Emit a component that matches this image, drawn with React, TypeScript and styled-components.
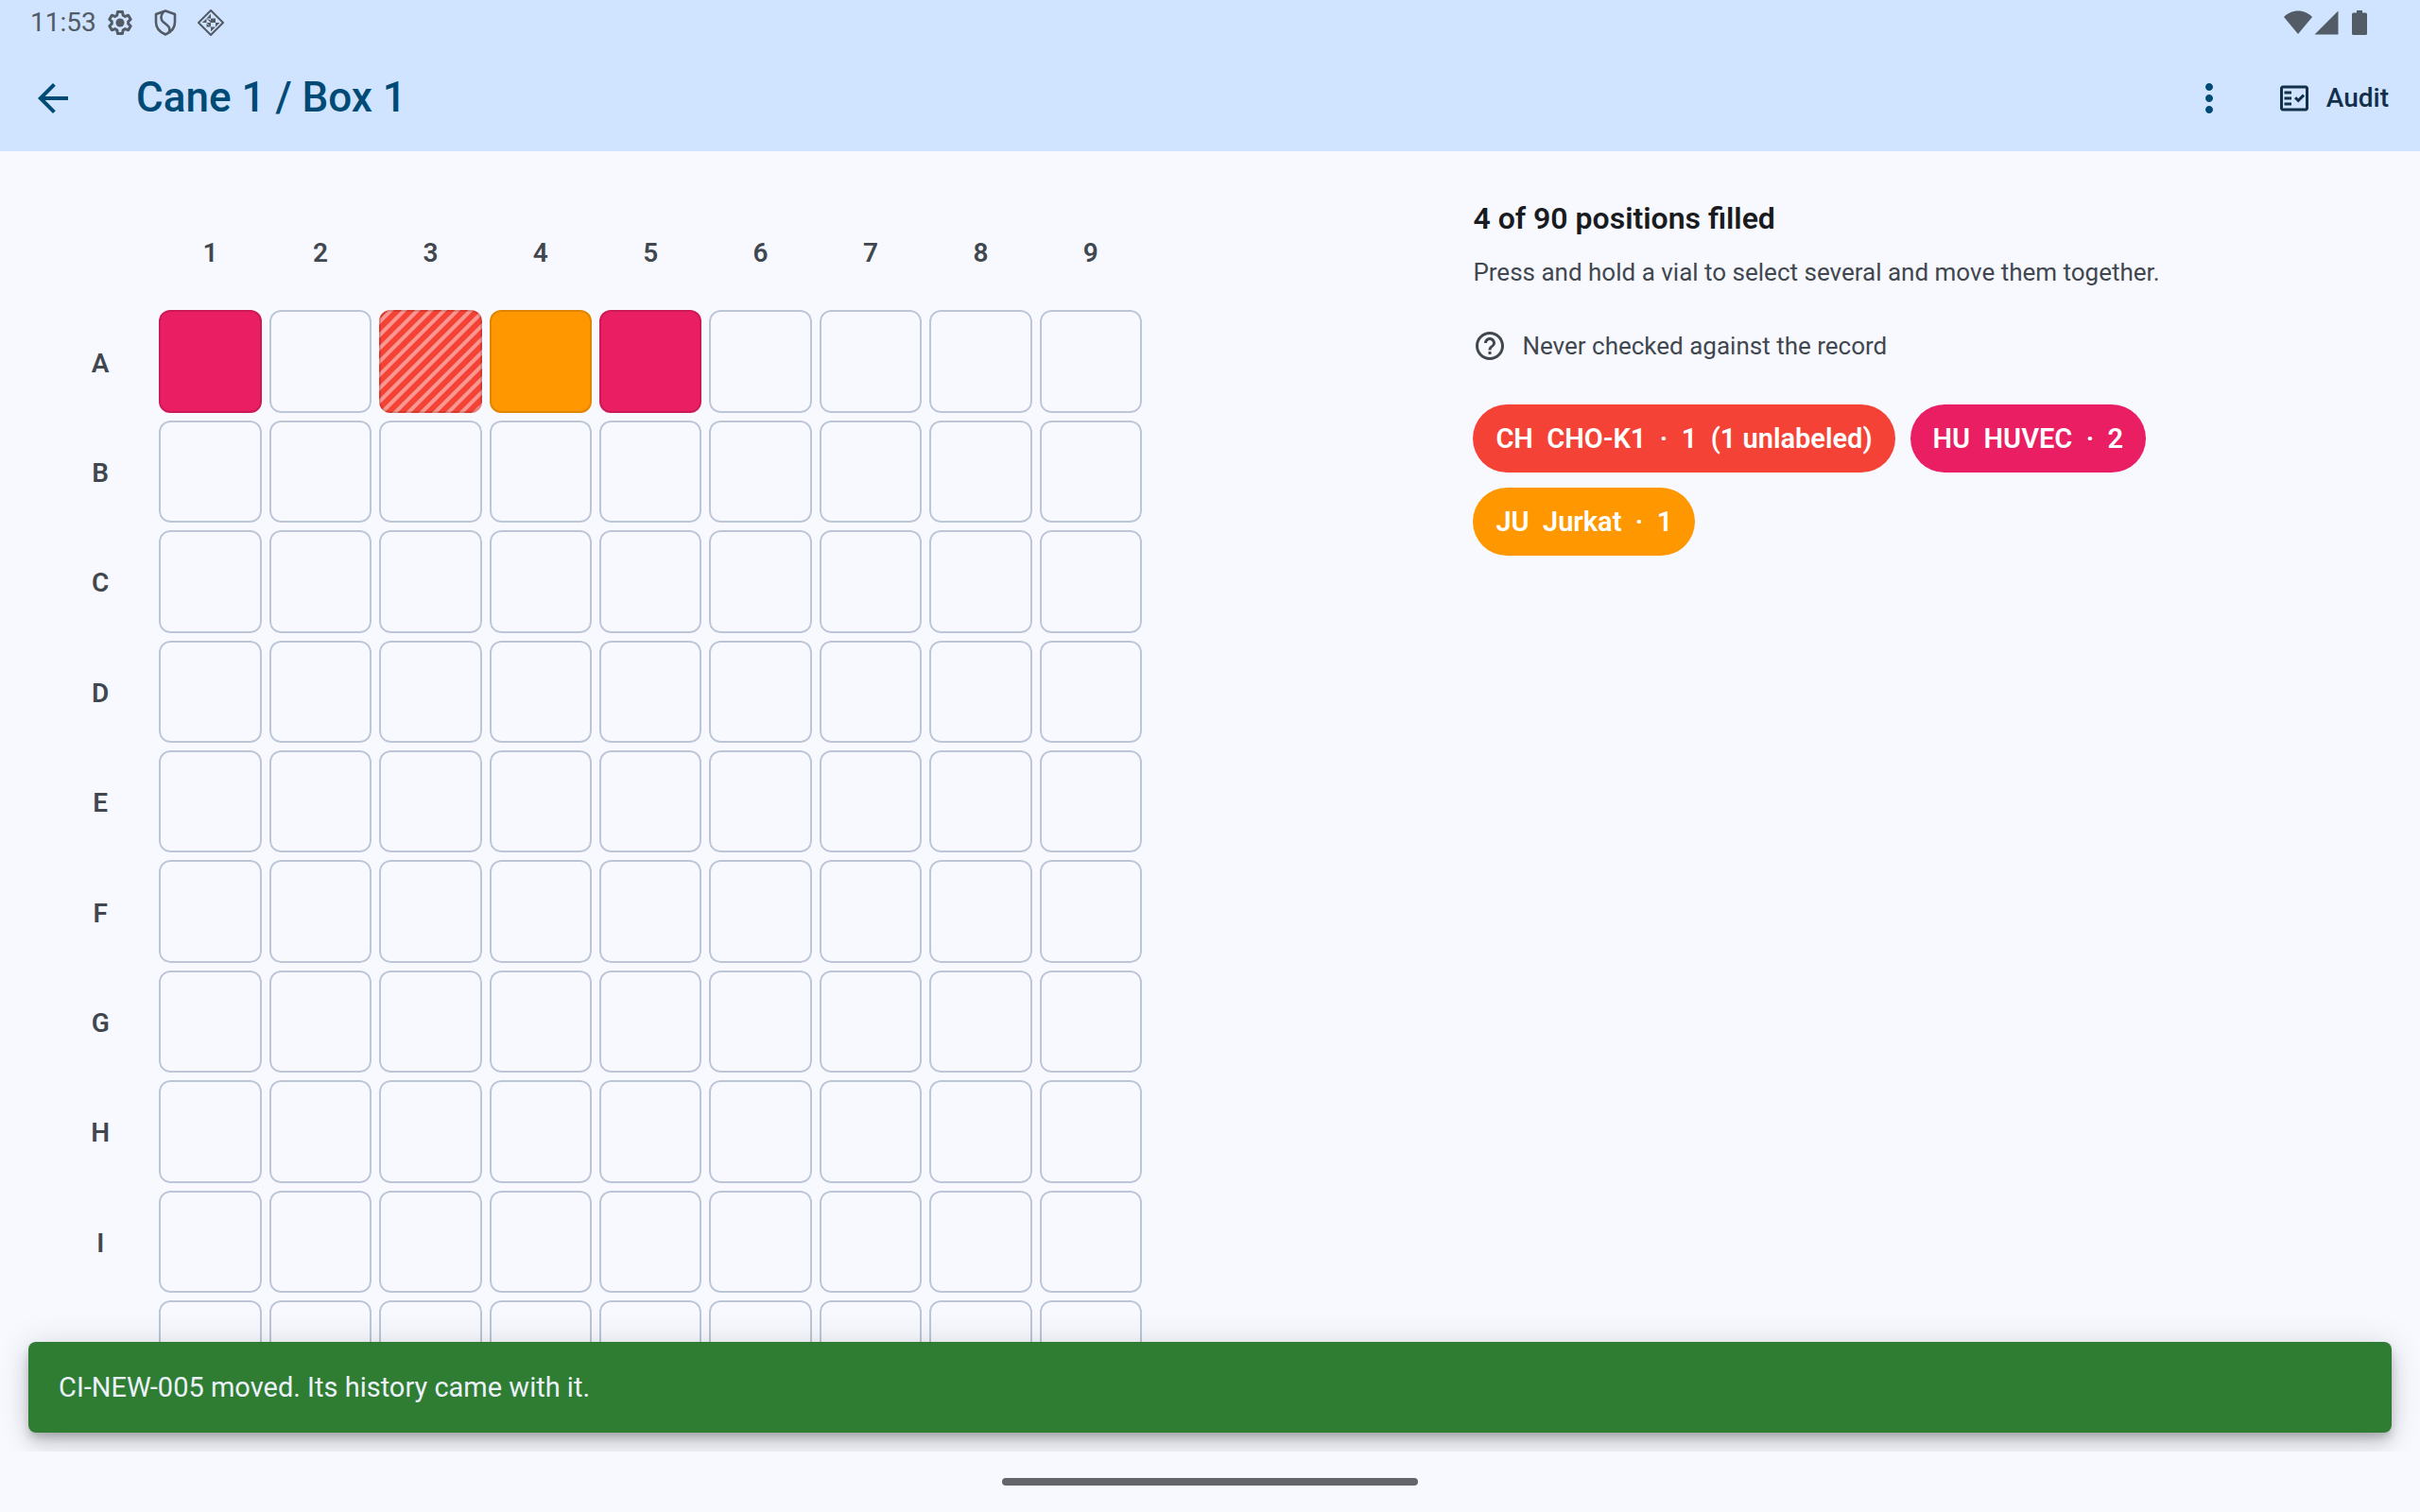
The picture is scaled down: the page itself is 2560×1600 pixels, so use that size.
import React from "react";
import styled, { createGlobalStyle } from "styled-components";

const GlobalStyle = createGlobalStyle`
  *, *::before, *::after { box-sizing: border-box; }
  html, body, #root { height: 100%; margin: 0; }
  body {
    background: #f8f9ff;
    color: #181c20;
    font-family: Roboto, "Liberation Sans", sans-serif;
    overflow: hidden;
  }
  h1, h2, p, ul { margin: 0; padding: 0; }
  button { border: 0; background: none; padding: 0; font: inherit; color: inherit; cursor: pointer; }
`;

const Screen = styled.div`
  display: flex;
  flex-direction: column;
  height: 100vh;
`;

const Header = styled.header`
  flex: none;
  background: #d0e4ff;
`;

const StatusBar = styled.div`
  display: flex;
  align-items: center;
  justify-content: space-between;
  height: 48px;
  padding: 0 56px 0 32px;
  color: #525b66;
`;

const StatusGroup = styled.div<{ $gap: number }>`
  display: flex;
  align-items: center;
  gap: ${({ $gap }) => $gap}px;
`;

const Clock = styled.time`
  font-size: 28px;
  line-height: 48px;
`;

const AppBar = styled.div`
  display: flex;
  align-items: center;
  height: 112px;
  padding: 0 33px 0 32px;
  color: #004b76;
`;

const IconButton = styled.button`
  display: flex;
  align-items: center;
  justify-content: center;
  width: 48px;
  height: 96px;
`;

const Title = styled.h1`
  flex: 1;
  margin-left: 64px;
  padding-bottom: 2px;
  font-size: 44px;
  line-height: 56px;
  font-weight: 500;
`;

const AuditButton = styled.button`
  display: flex;
  align-items: center;
  gap: 16px;
  height: 80px;
  margin-left: 48px;
  color: #12304b;
  font-size: 28px;
  line-height: 40px;
  font-weight: 500;
`;

const Body = styled.main`
  position: relative;
  flex: 1;
  min-height: 0;
  overflow: hidden;
`;

const Panes = styled.div`
  display: grid;
  grid-template-columns: minmax(0, 3fr) minmax(0, 2fr);
  gap: 80px;
  padding: 48px;
`;

const BoxGrid = styled.div`
  display: grid;
  grid-template-columns: repeat(10, minmax(0, 1fr));
  max-width: 1164px;
  align-self: start;
`;

const Slot = styled.div`
  aspect-ratio: 1;
  padding: 4px;
`;

const AxisLabel = styled(Slot)`
  display: flex;
  align-items: center;
  justify-content: center;
  padding-top: 8px;
  color: #41474f;
  font-size: 28px;
  line-height: 40px;
  font-weight: 600;
`;

const Position = styled.button<{ $fill?: string }>`
  position: relative;
  display: block;
  width: 100%;
  height: 100%;
  overflow: hidden;
  border-radius: 12px;
  background: ${({ $fill }) => $fill ?? "transparent"};

  &::after {
    content: "";
    position: absolute;
    inset: 0;
    border: 2px solid ${({ $fill }) => ($fill ? "rgba(0, 0, 0, 0.12)" : "#bcc6d6")};
    border-radius: 12px;
  }
`;

const HatchArt = styled.svg`
  display: block;
  width: 100%;
  height: 100%;
`;

const Summary = styled.section`
  display: flex;
  flex-direction: column;
`;

const SummaryTitle = styled.h2`
  font-size: 32px;
  line-height: 46px;
  font-weight: 600;
`;

const Hint = styled.p`
  margin-top: 18px;
  color: #41474f;
  font-size: 26px;
  line-height: 32px;
`;

const CheckState = styled.p`
  display: flex;
  align-items: center;
  gap: 16px;
  margin-top: 44px;
  color: #41474f;
  font-size: 26px;
  line-height: 36px;
`;

const Chips = styled.ul`
  display: flex;
  flex-wrap: wrap;
  gap: 16px;
  margin-top: 44px;
  list-style: none;
`;

const Chip = styled.li<{ $fill: string }>`
  height: 72px;
  padding: 16px 24px;
  border-radius: 36px;
  background: ${({ $fill }) => $fill};
  color: #ffffff;
  font-size: 29px;
  line-height: 40px;
  font-weight: 600;
  white-space: pre;
`;

const Snackbar = styled.div`
  position: absolute;
  left: 30px;
  right: 30px;
  bottom: 20px;
  padding: 28px 32px;
  border-radius: 8px;
  background: #2e7d32;
  color: #ecf1f9;
  font-size: 29px;
  line-height: 40px;
  box-shadow:
    0 6px 10px -2px rgba(0, 0, 0, 0.2),
    0 12px 20px rgba(0, 0, 0, 0.14),
    0 2px 36px rgba(0, 0, 0, 0.12);
`;

const NavBar = styled.footer`
  display: flex;
  flex: none;
  justify-content: center;
  height: 64px;
  padding-top: 28px;
`;

const Handle = styled.div`
  width: 440px;
  height: 8px;
  border-radius: 4px;
  background: #646568;
`;

const GearIcon = () => (
  <svg width="28" height="28" viewBox="0 0 28 28" fill="none" aria-hidden="true">
    <path
      d="M11.5 2.500h5l.7 3.700 2.200 1.200 3.300-1.200 2.500 4.300-2.500 2.300v2.400l2.500 2.300-2.500 4.300-3.300-1.200-2.200 1.200-.7 3.700h-5l-.7-3.700-2.200-1.200-3.300 1.200-2.500-4.300 2.500-2.300v-2.400l-2.500-2.300 2.500-4.300 3.300 1.200 2.200-1.200z"
      stroke="currentColor"
      strokeWidth="3"
      strokeLinejoin="round"
    />
    <circle cx="14" cy="14" r="4.500" fill="currentColor" />
  </svg>
);

const ShieldIcon = () => (
  <svg width="28" height="28" viewBox="0 0 28 28" fill="none" stroke="currentColor" aria-hidden="true">
    <path d="M14 1.500 24 5v8.500c0 6-4.200 10.600-10 13-5.800-2.400-10-7-10-13V5z" strokeWidth="2.600" strokeLinejoin="round" />
    <path d="M12 2.500c-3.400 4-3.400 8.200 0 11l4 3.200c2.500 2 3 4.600 1.800 8" strokeWidth="2.600" />
  </svg>
);

const DiamondIcon = () => (
  <svg width="28" height="28" viewBox="0 0 28 28" aria-hidden="true">
    <path d="M14 1 27 14 14 27 1 14z" fill="none" stroke="currentColor" strokeWidth="2" strokeLinejoin="round" />
    <path
      d="M14 4.500v5H9.500zM14 9.500h5L14 14zM9.500 9.500V14H4.800zM9.500 9.500 14 14v-2.500zM19 9.500V14h-5zM19 14h4.500L19 18.500zM9.500 14H14v4.500zM14 18.500h5L14 23.500zM9.500 18.500H14L9.500 15z"
      fill="currentColor"
    />
  </svg>
);

const WifiIcon = () => (
  <svg width="30" height="26" viewBox="0 0 30 26" aria-hidden="true">
    <path d="M15 25 0 7C4 3 9 .5 15 .5S26 3 30 7z" fill="currentColor" />
  </svg>
);

const SignalIcon = () => (
  <svg width="26" height="26" viewBox="0 0 26 26" aria-hidden="true">
    <path d="M25.500.5v25H.5z" fill="currentColor" />
  </svg>
);

const BatteryArt = styled.svg`
  margin-left: 12px;
`;

const BatteryIcon = () => (
  <BatteryArt width="16" height="26" viewBox="0 0 16 26" aria-hidden="true">
    <path
      d="M5 0h6v2.500h3.500A1.500 1.500 0 0 1 16 4v20.500a1.500 1.500 0 0 1-1.500 1.500h-13A1.500 1.500 0 0 1 0 24.500V4a1.500 1.500 0 0 1 1.500-1.500H5z"
      fill="currentColor"
    />
  </BatteryArt>
);

const BackIcon = () => (
  <svg width="48" height="48" viewBox="0 0 24 24" fill="currentColor" aria-hidden="true">
    <path d="M20 11H7.830l5.590-5.590L12 4l-8 8 8 8 1.410-1.410L7.830 13H20v-2z" />
  </svg>
);

const MoreIcon = () => (
  <svg width="48" height="48" viewBox="0 0 24 24" fill="currentColor" aria-hidden="true">
    <path d="M12 8c1.100 0 2-.9 2-2s-.9-2-2-2-2 .9-2 2 .9 2 2 2zm0 2c-1.100 0-2 .9-2 2s.9 2 2 2 2-.9 2-2-.9-2-2-2zm0 6c-1.100 0-2 .9-2 2s.9 2 2 2 2-.9 2-2-.9-2-2-2z" />
  </svg>
);

const FactCheckIcon = () => (
  <svg width="36" height="36" viewBox="0 0 24 24" fill="currentColor" aria-hidden="true">
    <path
      fillRule="evenodd"
      d="M20 3H4c-1.100 0-2 .9-2 2v14c0 1.100.9 2 2 2h16c1.100 0 2-.9 2-2V5c0-1.100-.9-2-2-2zm0 16H4V5h16v14z"
    />
    <path d="M19.410 10.420 17.990 9l-3.170 3.170-1.410-1.420L12 12.160 14.820 15zM5 7h5v2H5zM5 11h5v2H5zM5 15h5v2H5z" />
  </svg>
);

const HelpIcon = () => (
  <svg width="36" height="36" viewBox="0 0 24 24" fill="currentColor" aria-hidden="true">
    <path d="M11 18h2v-2h-2v2zm1-16C6.480 2 2 6.480 2 12s4.480 10 10 10 10-4.480 10-10S17.520 2 12 2zm0 18c-4.410 0-8-3.590-8-8s3.590-8 8-8 8 3.590 8 8-3.590 8-8 8zm0-14c-2.210 0-4 1.790-4 4h2c0-1.100.9-2 2-2s2 .9 2 2c0 2-3 1.750-3 5h2c0-2.250 3-2.500 3-5 0-2.210-1.790-4-4-4z" />
  </svg>
);

const HATCH_STEP = 14;

const Hatch = () => (
  <HatchArt viewBox="0 0 108 108" stroke="#ffffff" strokeOpacity="0.45" strokeWidth="4" aria-hidden="true">
    {Array.from({ length: 17 }, (_, i) => {
      const x = i * HATCH_STEP - 109;
      return <line key={x} x1={x - 2} y1={110} x2={x + 110} y2={-2} />;
    })}
  </HatchArt>
);

type Vial = { fill: string; unlabeled?: boolean };

const COLORS = { cho: "#f44336", huvec: "#e91e63", jurkat: "#ff9800" };

const VIALS: Record<string, Vial> = {
  A1: { fill: COLORS.huvec },
  A3: { fill: COLORS.cho, unlabeled: true },
  A4: { fill: COLORS.jurkat },
  A5: { fill: COLORS.huvec },
};

const COLUMNS = [1, 2, 3, 4, 5, 6, 7, 8, 9];
const ROWS = ["A", "B", "C", "D", "E", "F", "G", "H", "I", "J"];

const LEGEND = [
  { text: "CH  CHO-K1  ·  1  (1 unlabeled)", fill: COLORS.cho },
  { text: "HU  HUVEC  ·  2", fill: COLORS.huvec },
  { text: "JU  Jurkat  ·  1", fill: COLORS.jurkat },
];

export default function App() {
  return (
    <>
      <GlobalStyle />
      <Screen>
        <Header>
          <StatusBar>
            <StatusGroup $gap={11}>
              <Clock>11:53</Clock>
              <StatusGroup $gap={20}>
                <GearIcon />
                <ShieldIcon />
                <DiamondIcon />
              </StatusGroup>
            </StatusGroup>
            <StatusGroup $gap={2}>
              <WifiIcon />
              <SignalIcon />
              <BatteryIcon />
            </StatusGroup>
          </StatusBar>
          <AppBar>
            <IconButton aria-label="Back">
              <BackIcon />
            </IconButton>
            <Title>Cane 1 / Box 1</Title>
            <IconButton aria-label="More options">
              <MoreIcon />
            </IconButton>
            <AuditButton>
              <FactCheckIcon />
              Audit
            </AuditButton>
          </AppBar>
        </Header>
        <Body>
          <Panes>
            <BoxGrid>
              <Slot />
              {COLUMNS.map((column) => (
                <AxisLabel key={column}>{column}</AxisLabel>
              ))}
              {ROWS.map((row) => (
                <React.Fragment key={row}>
                  <AxisLabel>{row}</AxisLabel>
                  {COLUMNS.map((column) => {
                    const id = `${row}${column}`;
                    const vial = VIALS[id];
                    return (
                      <Slot key={id}>
                        <Position $fill={vial?.fill} aria-label={id}>
                          {vial?.unlabeled && <Hatch />}
                        </Position>
                      </Slot>
                    );
                  })}
                </React.Fragment>
              ))}
            </BoxGrid>
            <Summary>
              <SummaryTitle>4 of 90 positions filled</SummaryTitle>
              <Hint>Press and hold a vial to select several and move them together.</Hint>
              <CheckState>
                <HelpIcon />
                Never checked against the record
              </CheckState>
              <Chips>
                {LEGEND.map((item) => (
                  <Chip key={item.text} $fill={item.fill}>
                    {item.text}
                  </Chip>
                ))}
              </Chips>
            </Summary>
          </Panes>
          <Snackbar role="status">CI-NEW-005 moved. Its history came with it.</Snackbar>
        </Body>
        <NavBar>
          <Handle />
        </NavBar>
      </Screen>
    </>
  );
}
